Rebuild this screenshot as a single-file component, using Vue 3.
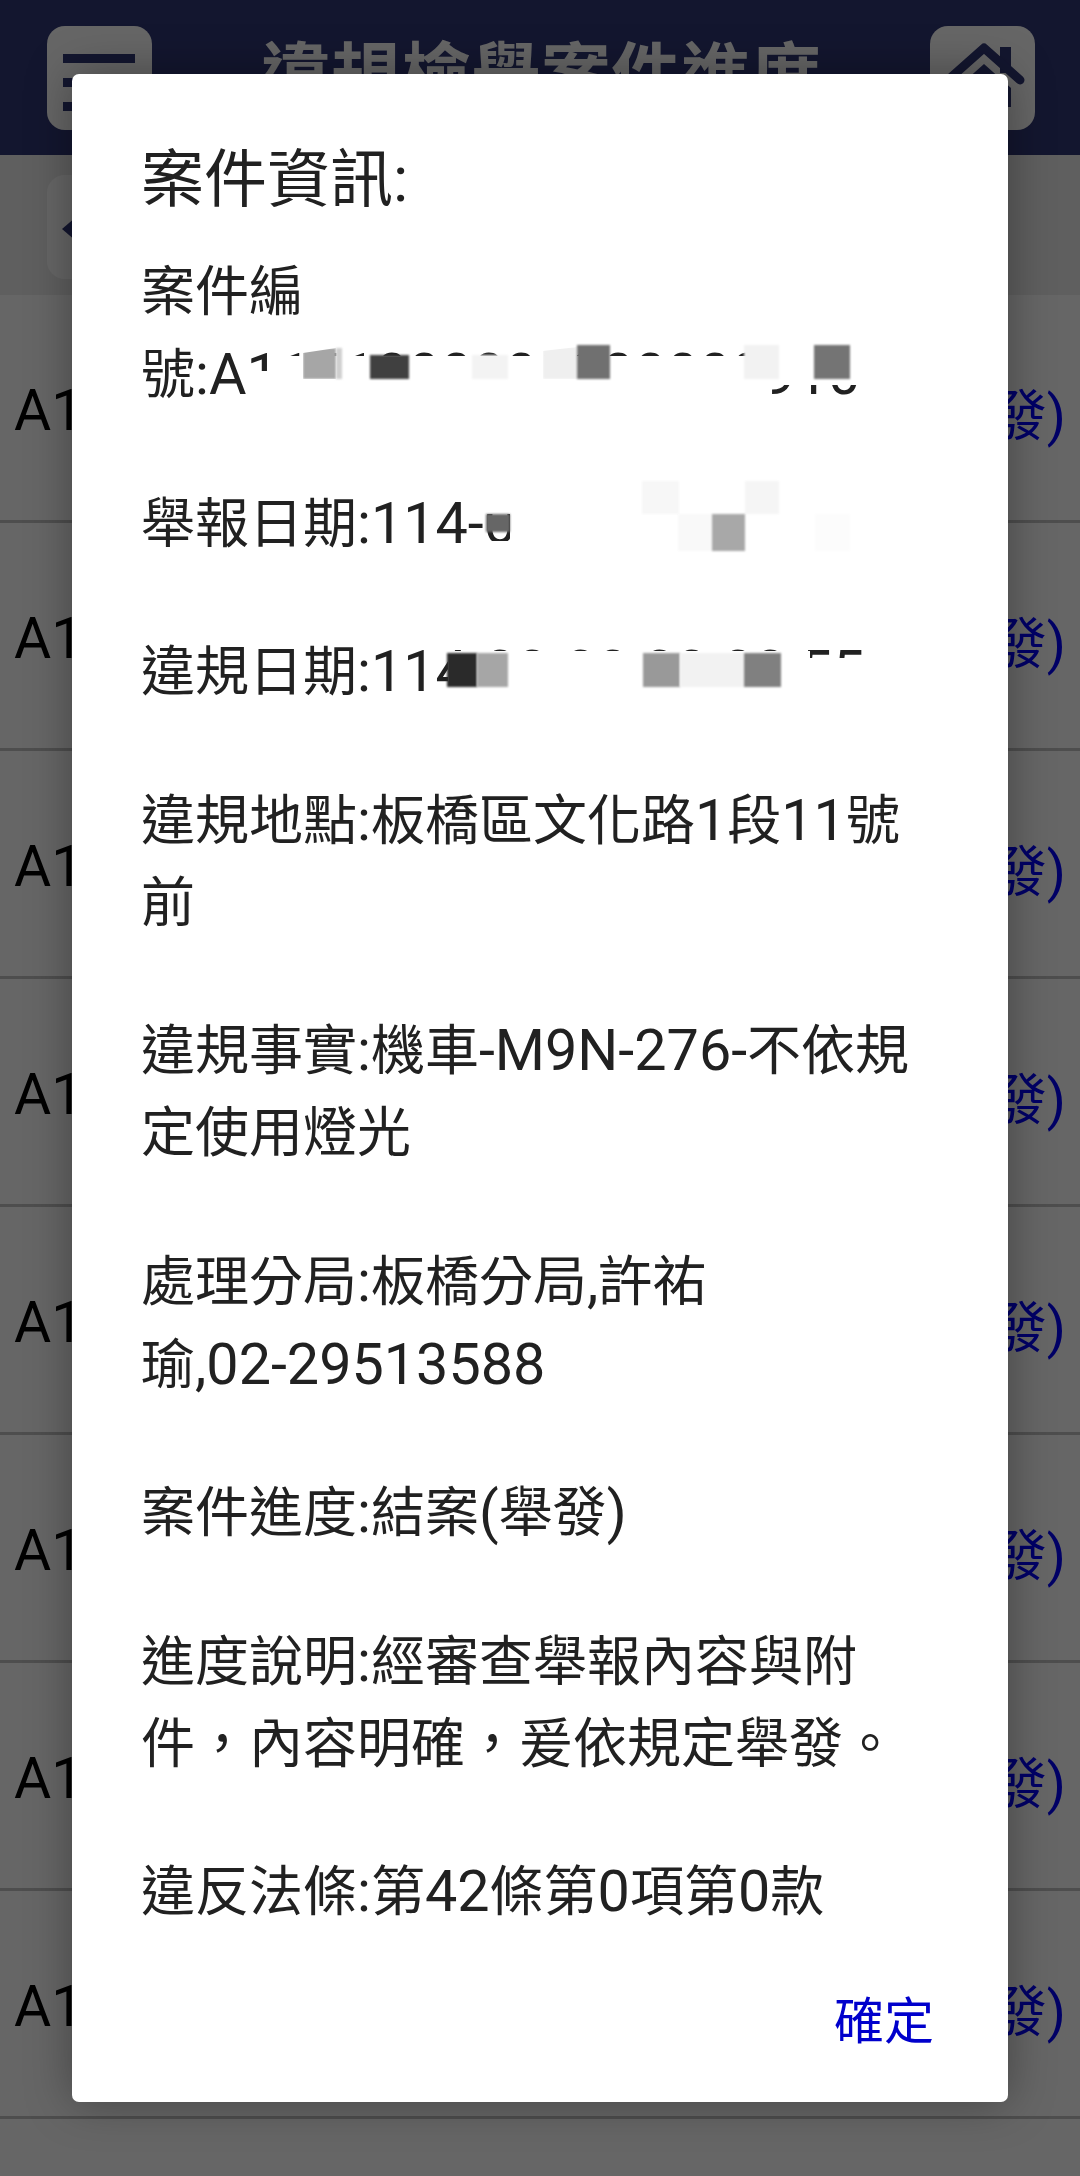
<script setup>
const rows = Array.from({ length: 9 }, (_, i) => i)
const split = (t) => t.match(/[\x20-\x7e]+|[^\x20-\x7e]+/g).map((s) => ({ s, lat: /^[\x20-\x7e]/.test(s) }))
const paragraphs = [
  ['案件編', '號:A1141000000000000910'],
  ['舉報日期:114-00-00 00:00:00'],
  ['違規日期:114-00-00 00:00:55'],
  ['違規地點:板橋區文化路1段11號', '前'],
  ['違規事實:機車-M9N-276-不依規', '定使用燈光'],
  ['處理分局:板橋分局,許祐', '瑜,02-29513588'],
  ['案件進度:結案(舉發)'],
  ['進度說明:經審查舉報內容與附', '件，內容明確，爰依規定舉發。'],
  ['違反法條:第42條第0項第0款']
].map((p) => p.map(split))
const W = '#ffffff'
const masks = [
  [254, 371, 22, 26, W], [276, 356, 490, 42, W], [766, 345, 94, 40, W],
  [510, 480, 356, 72, W], [486, 541, 30, 10, W], [485, 490, 30, 24, W],
  [448, 651, 362, 42, W], [810, 658, 55, 35, W]
]
const cells = [
  [303, 348, 33, 31, '#a6a6a6', 'polygon(0 5px, 100% 0, 100% 100%, 0 100%)'], [336, 348, 6, 31, '#cfcfcf'], [370, 355, 39, 24, '#404040'], [472, 355, 36, 24, '#f3f3f3'],
  [543, 347, 34, 32, '#efefef', 'polygon(0 4px, 100% 0, 100% 100%, 0 100%)'], [577, 345, 33, 34, '#707070'], [744, 345, 35, 34, '#f2f2f2'], [814, 345, 36, 34, '#747474'],
  [642, 481, 37, 33, '#f7f7f7'], [745, 481, 34, 33, '#f5f5f5'], [678, 514, 34, 37, '#f9f9f9'], [712, 514, 33, 37, '#a8a8a8'], [815, 514, 35, 37, '#fcfcfc'], [486, 514, 24, 18, '#666666'],
  [447, 653, 30, 34, '#2a2a2a'], [477, 653, 31, 34, '#a6a6a6'], [643, 653, 37, 34, '#999999'], [680, 653, 64, 34, '#f2f2f2'], [744, 653, 37, 34, '#808080']
]
const rect = ([x, y, w, h, c, clip]) => ({ left: x + 'px', top: y + 'px', width: w + 'px', height: h + 'px', background: c, clipPath: clip || 'none' })
</script>

<template>
  <div class="app">
    <header class="top">
      <button class="btn">
        <span class="bar"></span><span class="bar"></span><span class="bar"></span>
      </button>
      <h1 class="title">違規檢舉案件進度</h1>
      <button class="btn">
        <svg viewBox="0 0 105 105" width="105" height="105">
          <path class="navy" d="M70 21h11v26H70z" />
          <path class="roof" d="M18 54 54 22 90 54" />
          <path class="navy" d="M27 62 54 38 81 62V81H27z" />
        </svg>
      </button>
    </header>
    <div class="sub">
      <button class="btn back"><span class="arrow"></span></button>
    </div>
    <div v-for="r in rows" :key="r" class="row">
      <span class="id">A11</span>
      <span class="state">結案(舉發)</span>
    </div>

    <div class="scrim">
      <section class="dialog">
        <h2 class="dtitle">案件資訊:</h2>
        <div class="body">
          <p v-for="(p, i) in paragraphs" :key="i" class="para">
            <span v-for="(l, j) in p" :key="j" class="line"><span v-for="(seg, k) in l" :key="k" :class="{ lat: seg.lat }">{{ seg.s }}</span></span>
          </p>
        </div>
        <div class="foot"><span class="ok">確定</span></div>
      </section>
    </div>

    <div class="redact">
      <i v-for="(m, i) in masks" :key="'m' + i" class="mask" :style="rect(m)"></i>
      <i v-for="(c, i) in cells" :key="'c' + i" class="cell" :style="rect(c)"></i>
    </div>
  </div>
</template>

<style scoped>
.app {
  position: relative;
  width: 1080px;
  height: 2176px;
  overflow: hidden;
  background: #fff;
  font-family: Roboto, "Noto Sans CJK TC", sans-serif;
}
.top {
  height: 155px;
  box-sizing: border-box;
  padding: 0 45px 0 47px;
  background: #303775;
  display: flex;
  align-items: flex-start;
  justify-content: space-between;
}
.btn {
  width: 105px;
  height: 104px;
  margin-top: 26px;
  padding: 0;
  border: 0;
  border-radius: 18px;
  background: #fff;
  display: block;
  position: relative;
}
.bar {
  display: block;
  width: 72px;
  height: 9px;
  margin: 14px 0 15px 16px;
  background: #303775;
}
.bar:first-child { margin-top: 23px; }
.navy { fill: #303775; }
.roof { fill: none; stroke: #303775; stroke-width: 9; stroke-linecap: round; stroke-linejoin: round; }
.title {
  margin: 0;
  padding-top: 36px;
  font-size: 70px;
  line-height: 82px;
  font-weight: 700;
  color: #fff;
}
.sub {
  height: 140px;
  box-sizing: border-box;
  padding: 20px 47px 0;
  background: #eee;
}
.back { margin-top: 0; }
.arrow {
  position: absolute;
  left: 15px;
  top: 42px;
  border-style: solid;
  border-width: 12px 14px 12px 0;
  border-color: transparent #303775 transparent transparent;
}
.row {
  height: 228px;
  box-sizing: border-box;
  padding: 6px 14px 0;
  border-bottom: 3px solid #c4c4c4;
  display: flex;
  align-items: center;
  justify-content: space-between;
  font-size: 55px;
}
.id { color: #000; font-size: 57px; }
.state { color: #0000ff; }
.scrim {
  position: absolute;
  inset: 0;
  background: rgba(0, 0, 0, 0.6);
  padding: 74px 72px 0;
  box-sizing: border-box;
}
.dialog {
  height: 2028px;
  box-sizing: border-box;
  padding: 68px 72px 0 69px;
  background: #fff;
  border-radius: 7px;
  box-shadow: 0 0 46px rgba(0, 0, 0, 0.35);
  display: flex;
  flex-direction: column;
  color: #212121;
}
.dtitle {
  margin: 0 0 34px;
  font-size: 63px;
  line-height: 76px;
  font-weight: 400;
}
.para { margin: 0 0 65.5px; }
.para:last-child { margin-bottom: 0; }
.line {
  display: block;
  font-size: 54px;
  line-height: 82px;
  white-space: nowrap;
}
.lat { font-size: 57.5px; }
.foot {
  margin-top: auto;
  padding: 0 2px 52px 0;
  display: flex;
  justify-content: flex-end;
}
.ok {
  font-size: 50px;
  line-height: 56px;
  color: #0000cc;
}
.redact {
  position: absolute;
  inset: 0;
  pointer-events: none;
}
.mask, .cell { position: absolute; display: block; }
.cell { filter: blur(0.8px); }
</style>
